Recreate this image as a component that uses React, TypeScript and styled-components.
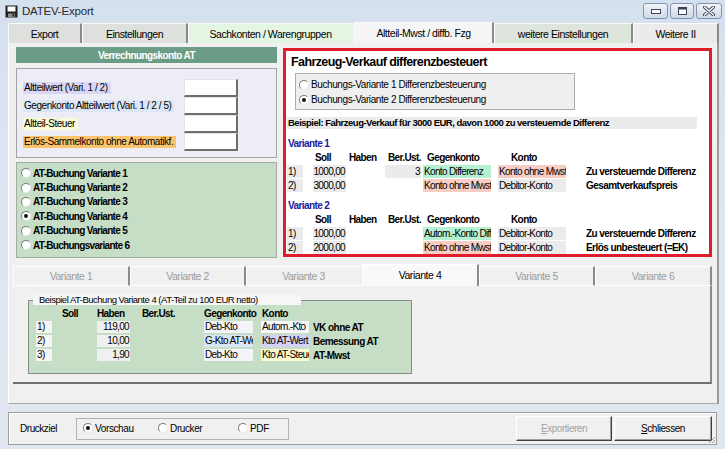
import React from 'react';
import styled, { createGlobalStyle } from 'styled-components';

const GlobalStyle = createGlobalStyle`
  html, body { margin: 0; padding: 0; }
  body {
    font-family: 'Liberation Sans', Arial, sans-serif;
    font-size: 10px;
    letter-spacing: -0.45px;
    color: #000;
  }
  * { box-sizing: border-box; }
`;

const Window = styled.div`
  width: 725px;
  height: 449px;
  overflow: hidden;
  background: linear-gradient(180deg, #d5e0ee 0%, #dbe5f1 30%, #e0e7f1 100%);
  display: flex;
  flex-direction: column;
`;

const TitleBar = styled.div`
  height: 22px;
  flex: none;
  display: flex;
  align-items: center;
  padding: 0 3px 0 5px;
`;

const TitleText = styled.span`
  margin-left: 4px;
  font-size: 11.5px;
  letter-spacing: -0.2px;
  color: #2a2a2a;
`;

const WinButtons = styled.div`
  margin-left: auto;
  align-self: flex-start;
  margin-top: 3px;
  display: flex;
  gap: 2px;
`;

const WinButton = styled.div<{ $w: number }>`
  width: ${(p) => p.$w}px;
  height: 16px;
  border: 1px solid #8393ad;
  border-radius: 3px;
  background: linear-gradient(180deg, #f1f4f9 0%, #dfe5ef 50%, #cfd8e6 100%);
  display: flex;
  align-items: center;
  justify-content: center;
`;

const Client = styled.div`
  flex: 1;
  display: flex;
  flex-direction: column;
  padding: 0 6px 0 8px;
`;

const TabStrip = styled.div`
  height: 21px;
  flex: none;
  display: flex;
  align-items: flex-start;
`;

const Tab = styled.div<{ $w: number; $bg: string; $selected?: boolean; $sep?: boolean }>`
  width: ${(p) => p.$w}px;
  height: ${(p) => (p.$selected ? 21 : 20)}px;
  margin-top: ${(p) => (p.$selected ? 0 : 1)}px;
  background: ${(p) => p.$bg};
  border-top: 1px solid #fbfbfb;
  border-left: 1px solid #fbfbfb;
  border-right: 2px solid ${(p) => (p.$sep ? '#8a8a8a' : 'transparent')};
  display: flex;
  align-items: center;
  justify-content: center;
  padding-top: ${(p) => (p.$selected ? 0 : 1)}px;
  font-size: 10.5px;
`;

const TabPage = styled.div`
  height: 361px;
  flex: none;
  background: #f0f0f0;
  border-left: 1px solid #fdfdfd;
  border-right: 2px solid #9a9a9a;
  border-bottom: 1px solid #a8a8a8;
  padding: 4px 0 0 4px;
  display: flex;
  flex-direction: column;
`;

const TopRow = styled.div`
  display: flex;
  gap: 6px;
  padding-left: 3px;
  height: 211px;
`;

const LeftCol = styled.div`
  width: 261px;
  display: flex;
  flex-direction: column;
`;

const GreenHeader = styled.div`
  height: 16px;
  background: #6b9c85;
  color: #fff;
  font-weight: bold;
  letter-spacing: -0.6px;
  display: flex;
  align-items: center;
  justify-content: center;
`;

const AccountBox = styled.div`
  margin-top: 5px;
  height: 90px;
  background: #ededf5;
  border: 1px solid #a2a2a8;
  padding: 10px 0 0 6px;
  display: grid;
  grid-template-columns: 161px 54px;
  grid-auto-rows: 18px;
  align-items: center;
  overflow: hidden;
`;

const AccLabel = styled.span<{ $bg: string }>`
  justify-self: start;
  background: ${(p) => p.$bg};
  padding: 0 3px 0 1px;
  line-height: 12px;
  white-space: nowrap;
`;

const AccInput = styled.div`
  width: 54px;
  height: 18px;
  background: #fff;
  border-top: 1px solid #e4e4e4;
  border-left: 1px solid #e4e4e4;
  border-right: 2px solid #6e6e6e;
  border-bottom: 2px solid #6e6e6e;
`;

const RadioBox = styled.div`
  margin-top: 4px;
  height: 96px;
  background: #c6ddc6;
  border: 1px solid #a4aaa4;
  padding: 3px 0 0 4px;
  display: flex;
  flex-direction: column;
`;

const RadioRow = styled.label<{ $h?: number; $bold?: boolean }>`
  height: ${(p) => p.$h ?? 14.4}px;
  display: flex;
  align-items: center;
  gap: 2px;
  white-space: nowrap;
  font-weight: ${(p) => (p.$bold ? 'bold' : 'normal')};
  letter-spacing: ${(p) => (p.$bold ? '-0.7px' : '-0.4px')};
`;

const RadioCircle = styled.span<{ $checked?: boolean }>`
  width: 10px;
  height: 10px;
  flex: none;
  border-radius: 50%;
  background: #fff;
  border: 1px solid;
  border-color: #7d7d7d #e6e6e6 #e6e6e6 #7d7d7d;
  display: inline-flex;
  align-items: center;
  justify-content: center;
  &::after {
    content: '';
    width: 4px;
    height: 4px;
    border-radius: 50%;
    background: ${(p) => (p.$checked ? '#111' : 'transparent')};
  }
`;

const RedPanel = styled.div`
  margin-top: 1px;
  width: 429px;
  height: 209px;
  border: 3px solid #e21d2b;
  background: #fff;
  display: flex;
  flex-direction: column;
`;

const PanelTitle = styled.div`
  margin: 4px 0 0 5px;
  height: 14px;
  line-height: 14px;
  font-size: 12.5px;
  letter-spacing: -0.6px;
  font-weight: bold;
`;

const VariantGroup = styled.div`
  margin: 4px 0 0 9px;
  width: 280px;
  height: 38px;
  background: #efefef;
  border: 1px solid #acacac;
  padding: 3px 0 0 3px;
  display: flex;
  flex-direction: column;
`;

const ExampleBar = styled.div`
  margin: 7px 0 0 1px;
  width: 410px;
  height: 12px;
  line-height: 12px;
  background: #ebebeb;
  font-size: 9.5px;
  letter-spacing: -0.5px;
  font-weight: bold;
  padding-left: 1px;
`;

const VariantHeading = styled.div<{ $mt: number }>`
  margin: ${(p) => p.$mt}px 0 0 2px;
  height: 12px;
  line-height: 12px;
  color: #1b1ba0;
  font-weight: bold;
  letter-spacing: -0.6px;
`;

const BookingGrid = styled.div<{ $cols: string; $rowH: number; $left: number }>`
  margin-left: ${(p) => p.$left}px;
  display: grid;
  grid-template-columns: ${(p) => p.$cols};
  grid-auto-rows: ${(p) => p.$rowH}px;
  align-items: center;
`;

const HeadCell = styled.div<{ $off?: number }>`
  font-weight: bold;
  letter-spacing: -0.6px;
  padding-left: ${(p) => p.$off ?? 0}px;
  align-self: end;
  line-height: 12px;
  white-space: nowrap;
`;

const Cell = styled.div<{ $w: number; $bg?: string; $right?: boolean; $h?: number }>`
  width: ${(p) => p.$w}px;
  height: ${(p) => p.$h ?? 13}px;
  line-height: ${(p) => p.$h ?? 13}px;
  background: ${(p) => p.$bg ?? 'transparent'};
  text-align: ${(p) => (p.$right ? 'right' : 'left')};
  padding: ${(p) => (p.$right ? '0 1px 0 0' : '0 0 0 1px')};
  letter-spacing: -0.65px;
  white-space: nowrap;
  overflow: hidden;
`;

const Desc = styled.div`
  font-weight: bold;
  letter-spacing: -0.55px;
  white-space: nowrap;
`;

const VariantArea = styled.div`
  margin-top: 6px;
  width: 699px;
  display: flex;
  flex-direction: column;
`;

const VTabStrip = styled.div`
  height: 22px;
  display: flex;
  align-items: flex-start;
`;

const VTab = styled.div<{ $w: number; $selected?: boolean; $sep?: boolean }>`
  width: ${(p) => p.$w}px;
  height: ${(p) => (p.$selected ? 22 : 20)}px;
  margin-top: ${(p) => (p.$selected ? 0 : 2)}px;
  background: ${(p) => (p.$selected ? '#f9f9f9' : '#f0f0f0')};
  color: ${(p) => (p.$selected ? '#000' : '#9c9c9c')};
  border-top: 1px solid #fff;
  border-left: 1px solid #fff;
  border-bottom: ${(p) => (p.$selected ? 'none' : '1px solid #fff')};
  border-right: 2px solid ${(p) => (p.$sep ? '#8a8a8a' : 'transparent')};
  display: flex;
  align-items: ${(p) => (p.$selected ? 'flex-start' : 'center')};
  padding-top: ${(p) => (p.$selected ? 4 : 0)}px;
  justify-content: center;
  font-size: 10.5px;
`;

const VTabPage = styled.div`
  height: 98px;
  background: #f0f0f0;
  border-right: 2px solid #8a8a8a;
  border-bottom: 2px solid #6f6f6f;
  padding: 14px 0 0 15px;
`;

const GroupBox = styled.div`
  position: relative;
  width: 384px;
  height: 74px;
  background: #c6ddc6;
  border: 1px solid #858a85;
  padding-top: 5px;
`;

const Legend = styled.span`
  position: absolute;
  top: -6px;
  left: 4px;
  width: 268px;
  height: 10px;
  line-height: 10px;
  background: #f6f6f6;
  font-size: 9.5px;
  letter-spacing: -0.5px;
  padding-left: 6px;
  white-space: nowrap;
`;

const Footer = styled.div`
  position: relative;
  margin-top: 8px;
  width: 709px;
  height: 33px;
  background: #f0f0f0;
  border: 1px solid #9c9c9c;
  box-shadow: inset 1px 1px 0 #fff;
  display: flex;
  align-items: center;
  padding: 0 4px 0 11px;
`;

const PrintGroup = styled.div`
  margin-left: 19px;
  width: 213px;
  height: 22px;
  border: 1px solid #b2b2b2;
  display: grid;
  grid-template-columns: 75px 80px auto;
  align-items: center;
  padding-left: 6px;
`;

const Buttons = styled.div`
  margin-left: auto;
  display: flex;
  gap: 2px;
`;

const Button = styled.div<{ $w: number; $disabled?: boolean }>`
  width: ${(p) => p.$w}px;
  height: 25px;
  background: #f0f0f0;
  border-top: 1px solid #fff;
  border-left: 1px solid #fff;
  border-right: 1px solid #404040;
  border-bottom: 1px solid #404040;
  box-shadow: inset -1px -1px 0 #a0a0a0;
  color: ${(p) => (p.$disabled ? '#a3a3a3' : '#000')};
  display: flex;
  align-items: center;
  justify-content: center;
  u { text-decoration: underline; }
`;

const Grip = styled.svg`
  position: absolute;
  right: 0;
  bottom: 0;
`;

const FloppyIcon = () => (
  <svg width="13" height="13" viewBox="0 0 13 13">
    <rect x="0.5" y="0.5" width="12" height="12" fill="#1e1e1e" />
    <rect x="2.5" y="1.5" width="8" height="5" fill="#fff" />
    <rect x="3" y="8.5" width="7" height="3.5" fill="#8a8a8a" />
    <rect x="7.5" y="9" width="1.5" height="2.5" fill="#1e1e1e" />
  </svg>
);

const topTabs = [
  { label: 'Export', w: 74, bg: '#dde0dd', sep: true },
  { label: 'Einstellungen', w: 106, bg: '#dde0dc', sep: true },
  { label: 'Sachkonten / Warengruppen', w: 166, bg: '#e4f5e4', sep: false },
  { label: 'Altteil-Mwst / diffb. Fzg', w: 140, bg: '#f5f5f5', sep: true, selected: true },
  { label: 'weitere Einstellungen', w: 139, bg: '#dde5dd', sep: true },
  { label: 'Weitere II', w: 86, bg: '#ebebeb', sep: true },
];

const accounts = [
  { label: 'Altteilwert (Vari. 1 / 2)', bg: '#dad6f6' },
  { label: 'Gegenkonto Altteilwert (Vari. 1 / 2 / 5)', bg: '#dbe7f7' },
  { label: 'Altteil-Steuer', bg: '#fafad4' },
  { label: 'Erlös-Sammelkonto ohne Automatikf.', bg: '#fbc46c' },
];

const atVariants = [
  'AT-Buchung Variante 1',
  'AT-Buchung Variante 2',
  'AT-Buchung Variante 3',
  'AT-Buchung Variante 4',
  'AT-Buchung Variante 5',
  'AT-Buchungsvariante 6',
];

const GRAY = '#ebebeb';
const MINT = '#b6f0d2';
const SALMON = '#f8cdc4';

type Row = {
  n: string;
  soll: string;
  ber?: string;
  gegen: string;
  gegenBg: string;
  konto: string;
  kontoBg: string;
  desc: string;
};

const v1: Row[] = [
  { n: '1)', soll: '1000,00', ber: '3', gegen: 'Konto Differenz', gegenBg: MINT, konto: 'Konto ohne Mwst', kontoBg: SALMON, desc: 'Zu versteuernde Differenz' },
  { n: '2)', soll: '3000,00', gegen: 'Konto ohne Mwst', gegenBg: SALMON, konto: 'Debitor-Konto', kontoBg: GRAY, desc: 'Gesamtverkaufspreis' },
];
const v2: Row[] = [
  { n: '1)', soll: '1000,00', gegen: 'Autom.-Konto Differenz', gegenBg: MINT, konto: 'Debitor-Konto', kontoBg: GRAY, desc: 'Zu versteuernde Differenz' },
  { n: '2)', soll: '2000,00', gegen: 'Konto ohne Mwst', gegenBg: SALMON, konto: 'Debitor-Konto', kontoBg: GRAY, desc: 'Erlös unbesteuert (=EK)' },
];

const RIGHT_COLS = '26px 33px 39px 38px 75px 88px 1fr';

const BookingTable = ({ rows }: { rows: Row[] }) => (
  <BookingGrid $cols={RIGHT_COLS} $rowH={14} $left={1}>
    <div />
    <HeadCell $off={2}>Soll</HeadCell>
    <HeadCell $off={3}>Haben</HeadCell>
    <HeadCell $off={3}>Ber.Ust.</HeadCell>
    <HeadCell $off={4}>Gegenkonto</HeadCell>
    <HeadCell $off={13}>Konto</HeadCell>
    <div />
    {rows.map((r) => (
      <React.Fragment key={r.n + r.soll}>
        <Cell $w={16} $bg={GRAY}>{r.n}</Cell>
        <Cell $w={33} $bg={GRAY} $right>{r.soll}</Cell>
        <div />
        {r.ber ? <Cell $w={36} $bg={GRAY} $right>{r.ber}</Cell> : <div />}
        <Cell $w={68} $bg={r.gegenBg}>{r.gegen}</Cell>
        <Cell $w={68} $bg={r.kontoBg}>{r.konto}</Cell>
        <Desc>{r.desc}</Desc>
      </React.Fragment>
    ))}
  </BookingGrid>
);

const vTabs = [
  { label: 'Variante 1', w: 117, sep: true },
  { label: 'Variante 2', w: 116, sep: true },
  { label: 'Variante 3', w: 116, sep: false },
  { label: 'Variante 4', w: 117, sep: true, selected: true },
  { label: 'Variante 5', w: 116, sep: true },
  { label: 'Variante 6', w: 117, sep: true },
];

const atRows = [
  { n: '1)', haben: '119,00', gegen: 'Deb-Kto', gegenBg: '#f4f4f8', konto: 'Autom.-Kto', kontoBg: '#f8f8f8', desc: 'VK ohne AT' },
  { n: '2)', haben: '10,00', gegen: 'G-Kto AT-Wert', gegenBg: '#d9e6f8', konto: 'Kto AT-Wert', kontoBg: '#d6d2f7', desc: 'Bemessung AT' },
  { n: '3)', haben: '1,90', gegen: 'Deb-Kto', gegenBg: '#f4f4f8', konto: 'Kto AT-Steuer', kontoBg: '#fafad0', desc: 'AT-Mwst' },
];

export default function App() {
  return (
    <>
      <GlobalStyle />
      <Window>
        <TitleBar>
          <FloppyIcon />
          <TitleText>DATEV-Export</TitleText>
          <WinButtons>
            <WinButton $w={25}>
              <svg width="10" height="5" viewBox="0 0 10 5">
                <rect x="0.5" y="0.5" width="9" height="4" fill="#fff" stroke="#3a4658" />
              </svg>
            </WinButton>
            <WinButton $w={24}>
              <svg width="9" height="8" viewBox="0 0 9 8">
                <rect x="0.5" y="0.5" width="8" height="7" fill="#fff" stroke="#3a4658" />
                <rect x="1" y="1" width="7" height="1.5" fill="#3a4658" />
              </svg>
            </WinButton>
            <WinButton $w={26}>
              <svg width="12" height="10" viewBox="0 0 12 10">
                <path d="M1.5 1 L10.5 9 M10.5 1 L1.5 9" stroke="#3a4658" strokeWidth="3.2" strokeLinecap="round" />
                <path d="M1.5 1 L10.5 9 M10.5 1 L1.5 9" stroke="#fff" strokeWidth="1.4" strokeLinecap="round" />
              </svg>
            </WinButton>
          </WinButtons>
        </TitleBar>
        <Client>
          <TabStrip>
            {topTabs.map((t) => (
              <Tab key={t.label} $w={t.w} $bg={t.bg} $sep={t.sep} $selected={t.selected}>
                {t.label}
              </Tab>
            ))}
          </TabStrip>
          <TabPage>
            <TopRow>
              <LeftCol>
                <GreenHeader>Verrechnungskonto AT</GreenHeader>
                <AccountBox>
                  {accounts.map((a) => (
                    <React.Fragment key={a.label}>
                      <AccLabel $bg={a.bg}>{a.label}</AccLabel>
                      <AccInput />
                    </React.Fragment>
                  ))}
                </AccountBox>
                <RadioBox>
                  {atVariants.map((v, i) => (
                    <RadioRow key={v} $bold>
                      <RadioCircle $checked={i === 3} />
                      {v}
                    </RadioRow>
                  ))}
                </RadioBox>
              </LeftCol>
              <RedPanel>
                <PanelTitle>Fahrzeug-Verkauf differenzbesteuert</PanelTitle>
                <VariantGroup>
                  <RadioRow $h={15}>
                    <RadioCircle />
                    Buchungs-Variante 1 Differenzbesteuerung
                  </RadioRow>
                  <RadioRow $h={15}>
                    <RadioCircle $checked />
                    Buchungs-Variante 2 Differenzbesteuerung
                  </RadioRow>
                </VariantGroup>
                <ExampleBar>Beispiel: Fahrzeug-Verkauf für 3000 EUR, davon 1000 zu versteuernde Differenz</ExampleBar>
                <VariantHeading $mt={9}>Variante 1</VariantHeading>
                <BookingTable rows={v1} />
                <VariantHeading $mt={8}>Variante 2</VariantHeading>
                <BookingTable rows={v2} />
              </RedPanel>
            </TopRow>
            <VariantArea>
              <VTabStrip>
                {vTabs.map((t) => (
                  <VTab key={t.label} $w={t.w} $sep={t.sep} $selected={t.selected}>
                    {t.label}
                  </VTab>
                ))}
              </VTabStrip>
              <VTabPage>
                <GroupBox>
                  <Legend>Beispiel AT-Buchung Variante 4 (AT-Teil zu 100 EUR netto)</Legend>
                  <BookingGrid $cols="26px 35px 45px 62px 57px 52px 1fr" $rowH={14} $left={7}>
                    <div />
                    <HeadCell>Soll</HeadCell>
                    <HeadCell>Haben</HeadCell>
                    <HeadCell>Ber.Ust.</HeadCell>
                    <HeadCell $off={0}>Gegenkonto</HeadCell>
                    <HeadCell $off={1}>Konto</HeadCell>
                    <div />
                    {atRows.map((r) => (
                      <React.Fragment key={r.n}>
                        <Cell $w={16} $bg="#f5f5f5" $h={12}>{r.n}</Cell>
                        <div />
                        <Cell $w={33} $bg="#f0f0f0" $right $h={12}>{r.haben}</Cell>
                        <div />
                        <Cell $w={49} $bg={r.gegenBg} $h={12}>{r.gegen}</Cell>
                        <Cell $w={48} $bg={r.kontoBg} $h={12}>{r.konto}</Cell>
                        <Desc>{r.desc}</Desc>
                      </React.Fragment>
                    ))}
                  </BookingGrid>
                </GroupBox>
              </VTabPage>
            </VariantArea>
          </TabPage>
          <Footer>
            <span>Druckziel</span>
            <PrintGroup>
              <RadioRow>
                <RadioCircle $checked />
                Vorschau
              </RadioRow>
              <RadioRow>
                <RadioCircle />
                Drucker
              </RadioRow>
              <RadioRow>
                <RadioCircle />
                PDF
              </RadioRow>
            </PrintGroup>
            <Buttons>
              <Button $w={96} $disabled>
                <span><u>E</u>xportieren</span>
              </Button>
              <Button $w={98}>
                <span><u>S</u>chliessen</span>
              </Button>
            </Buttons>
            <Grip width="8" height="8" viewBox="0 0 8 8">
              <path d="M7 1 L1 7 M7 4 L4 7 M7 6.5 L6.5 7" stroke="#9a9a9a" strokeWidth="1" />
            </Grip>
          </Footer>
        </Client>
      </Window>
    </>
  );
}
